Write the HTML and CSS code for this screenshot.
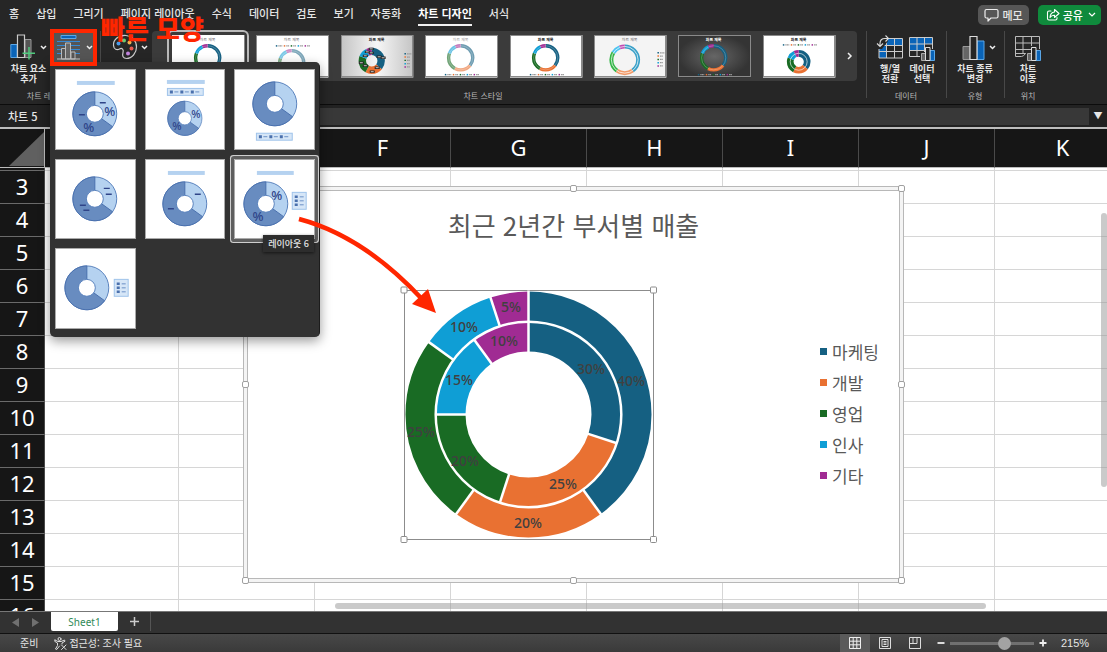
FILE: index.html
```html
<!DOCTYPE html>
<html lang="ko">
<head>
<meta charset="utf-8">
<title>차트 디자인</title>
<link rel="stylesheet" href="styles.css">
</head>
<body>
<svg class="defs" aria-hidden="true">
  <defs>
    <g id="mini-donut">
      <circle r="22" fill="#b5d2f0" stroke="#5b83bd"/>
      <path d="M0 0V-22A22 22 0 1 0 17.8 12.9Z" fill="#688cc0" stroke="#4a70ad"/>
      <circle r="8.5" fill="#fff" stroke="#5b83bd"/>
    </g>
    <g id="mini-legend-row">
      <rect x=".5" y=".5" width="36" height="7" fill="#d6e6f7" stroke="#9fc3ea"/>
      <path d="M3 4h3M13.500 4h3M24 4h3" stroke="#4a70ad" stroke-width="3"/>
      <path d="M7.500 4h4M18 4h4M28.500 4h4" stroke="#6a8fc6"/>
    </g>
    <g id="mini-legend-col">
      <rect x=".5" y=".5" width="14" height="17" fill="#d6e6f7" stroke="#9fc3ea"/>
      <path d="M3 5h3M3 9h3M3 13h3" stroke="#4a70ad" stroke-width="2.500"/>
      <path d="M8 5h4M8 9h4M8 13h4" stroke="#6a8fc6"/>
    </g>
    <g id="style-ring" fill="none" stroke-width="3.400" transform="rotate(-90)">
      <circle r="12.200" pathLength="100" stroke="#156082" stroke-dasharray="36 64"/>
      <circle r="12.200" pathLength="100" stroke="#e97132" stroke-dasharray="22 78" stroke-dashoffset="-36"/>
      <circle r="12.200" pathLength="100" stroke="#196b24" stroke-dasharray="23 77" stroke-dashoffset="-58"/>
      <circle r="12.200" pathLength="100" stroke="#0f9ed5" stroke-dasharray="12 88" stroke-dashoffset="-81"/>
      <circle r="12.200" pathLength="100" stroke="#a02b93" stroke-dasharray="7 93" stroke-dashoffset="-93"/>
      <circle r="12.200" stroke="#fff" stroke-width=".4" opacity=".6"/>
    </g>
    <g id="style-donut" fill="none" stroke-width="7.500" transform="rotate(-90)">
      <circle r="9.500" pathLength="100" stroke="#156082" stroke-dasharray="36 64"/>
      <circle r="9.500" pathLength="100" stroke="#e97132" stroke-dasharray="22 78" stroke-dashoffset="-36"/>
      <circle r="9.500" pathLength="100" stroke="#196b24" stroke-dasharray="23 77" stroke-dashoffset="-58"/>
      <circle r="9.500" pathLength="100" stroke="#0f9ed5" stroke-dasharray="12 88" stroke-dashoffset="-81"/>
      <circle r="9.500" pathLength="100" stroke="#a02b93" stroke-dasharray="7 93" stroke-dashoffset="-93"/>
    </g>
    <g id="style-keys">
      <path d="M0 0h1.500" stroke="#156082" stroke-width="1.500"/><path d="M8 0h1.500" stroke="#e97132" stroke-width="1.500"/><path d="M15 0h1.500" stroke="#196b24" stroke-width="1.500"/><path d="M22 0h1.500" stroke="#0f9ed5" stroke-width="1.500"/><path d="M29 0h1.500" stroke="#a02b93" stroke-width="1.500"/>
      <path d="M2.500 0h4M10.500 0h3M17.500 0h3M24.500 0h3M31.500 0h3" stroke="#999" stroke-width="1.200" stroke-dasharray="1.300 .3"/>
    </g>
    <g id="style-keys-col">
      <path d="M0 0h1.500" stroke="#156082" stroke-width="1.500"/><path d="M0 3.300h1.500" stroke="#e97132" stroke-width="1.500"/><path d="M0 6.600h1.500" stroke="#196b24" stroke-width="1.500"/><path d="M0 9.900h1.500" stroke="#0f9ed5" stroke-width="1.500"/><path d="M0 13.200h1.500" stroke="#a02b93" stroke-width="1.500"/>
      <path d="M2.500 0h4.500M2.500 3.300h3M2.500 6.600h3M2.500 9.900h3M2.500 13.200h3" stroke="#999" stroke-width="1.200" stroke-dasharray="1.300 .3"/>
    </g>
    <linearGradient id="shade-light"><stop offset="0" stop-color="#c4c4c4"/><stop offset=".5" stop-color="#f6f6f6"/><stop offset="1" stop-color="#c4c4c4"/></linearGradient>
    <radialGradient id="shade-dark"><stop offset="0" stop-color="#666"/><stop offset="1" stop-color="#343434"/></radialGradient>
  </defs>
</svg>

<header class="tabs">
  <nav class="tab-list">
    <a href="#">홈</a><a href="#">삽입</a><a href="#">그리기</a><a href="#">페이지 레이아웃</a><a href="#">수식</a><a href="#">데이터</a><a href="#">검토</a><a href="#">보기</a><a href="#">자동화</a><a href="#" class="current">차트 디자인</a><a href="#">서식</a>
  </nav>
  <div class="tab-actions">
    <button class="pill memo" type="button">
      <svg width="15" height="14" viewBox="0 0 15 14" fill="none" stroke="#eee" stroke-width="1.200" stroke-linejoin="round"><path d="M2.500 1.500h10q1.500 0 1.500 1.500v5.500q0 1.500-1.500 1.500H7l-3 3v-3H2.500Q1 10 1 8.500V3q0-1.500 1.500-1.500z"/></svg>메모</button>
    <button class="pill share" type="button">
      <svg width="14" height="14" viewBox="0 0 14 14" fill="none" stroke="#fff" stroke-width="1.100" stroke-linejoin="round" stroke-linecap="round"><path d="M5 3H3Q1.500 3 1.500 4.500v6Q1.500 12 3 12h6.500q1.500 0 1.500-1.500V9.500"/><path d="M8.500 1.500l4.500 4-4.500 4V7.200Q5.500 7 4 9.500 4.300 4.500 8.500 4z"/></svg>공유
      <svg width="8" height="6" viewBox="0 0 8 6" fill="none" stroke="#fff" stroke-width="1.200"><path d="M1 1l3 3 3-3"/></svg></button>
  </div>
</header>

<section class="ribbon">
  <div class="group group-layout">
    <div class="tools">
      <button class="tool" type="button">
        <span class="tool-icon">
          <svg width="26" height="27" viewBox="0 0 26 27"><path d="M.8 10.500h6.400v13H.8z" fill="#0a64b8" stroke="#5aa6e6"/><path d="M15 5.500h6v18h-6z" fill="#555" stroke="#999"/><path d="M7.500 1h7v22.500h-7z" fill="#262626" stroke="#ccc" stroke-width="1.200"/><path d="M19 13v12.500M12.500 19.200H25" stroke="#4fc97d" stroke-width="1.500"/></svg>
          <svg class="caret" width="7" height="5" viewBox="0 0 7 5"><path d="M1 1l2.500 2.500L6 1" fill="none" stroke="#eee" stroke-width="1.500"/></svg>
        </span>
        <span>차트 요소<br>추가</span>
      </button>
      <button class="tool tool-open" type="button" aria-label="빠른 레이아웃">
        <svg width="25" height="26" viewBox="0 0 25 26"><path d="M5 1.500h15v3H5z" fill="#0a64b8" stroke="#5aa6e6"/><path d="M1 7.500h23M1 11.500h23M1 15.500h23M1 19.500h23" stroke="#3389d6" stroke-width="1.200"/><path d="M5.500 14.500h4V25h-4zM15 18h4v7h-4z" fill="#555" stroke="#bbb"/><path d="M9.500 9h5v16h-5z" fill="#666" stroke="#bbb"/><path d="M1 25h23" stroke="#ccc"/></svg>
        <svg class="caret" width="7" height="5" viewBox="0 0 7 5"><path d="M1 1l2.500 2.500L6 1" fill="none" stroke="#eee" stroke-width="1.500"/></svg>
      </button>
    </div>
    <div class="group-name">차트 레이아웃</div>
  </div>

  <div class="group group-styles">
    <div class="tools">
      <button class="tool tool-colors" type="button" aria-label="색 변경">
        <svg width="26" height="27" viewBox="0 0 26 27"><path d="M14 1.500C6 1 1 6 1.500 11.500c.3 4 3.500 5 6 3.500 2.500-1.500 4.500.5 3.500 3.500-1 3.500 0 6 3.500 6C20 24.500 24.500 19 24.500 13S20 2 14 1.500z" fill="#262626" stroke="#ccc" stroke-width="1.200"/><circle cx="6.500" cy="9.500" r="2" fill="#4a9bea"/><circle cx="12" cy="6.500" r="2" fill="#6acb6e"/><circle cx="17.500" cy="8.500" r="2" fill="#f2b04e"/><circle cx="19.500" cy="14.500" r="2" fill="#ec5a50"/><circle cx="16" cy="19.500" r="2" fill="#c183dd"/></svg>
        <svg class="caret" width="7" height="5" viewBox="0 0 7 5"><path d="M1 1l2.500 2.500L6 1" fill="none" stroke="#eee" stroke-width="1.500"/></svg>
      </button>
      <div class="gallery">
        <button class="style chosen" type="button" aria-label="스타일 1"><svg viewBox="0 0 73 43"><rect width="73" height="43" fill="#fff"/><text x="36" y="6">차트 제목</text><use href="#style-ring" x="36" y="23"/></svg></button>
        <button class="style" type="button" aria-label="스타일 2"><svg viewBox="0 0 73 43"><rect width="73" height="43" fill="#fff"/><text x="36" y="6">차트 제목</text><use href="#style-keys" x="20" y="11"/><use href="#style-ring" x="36" y="28" opacity=".55"/></svg></button>
        <button class="style" type="button" aria-label="스타일 3"><svg viewBox="0 0 73 43"><rect width="73" height="43" fill="url(#shade-light)"/><text x="36" y="6" class="bold">차트 제목</text><use href="#style-donut" x="31" y="26"/><path d="M36 22h5M40 23h5M34 33h5M29 37h5M22 31h5M18 28h5M22 21h5M24 17h5M28 18h5M28 14h5" stroke="#222" stroke-width="2.400"/><path d="M37 22h3M41 23h3M35 33h3M30 37h3M23 31h3M19 28h3M23 21h3M25 17h3M29 18h3M29 14h3" stroke="#ccc"/><use href="#style-keys-col" x="64" y="19"/></svg></button>
        <button class="style" type="button" aria-label="스타일 4"><svg viewBox="0 0 73 43"><rect width="73" height="43" fill="#fff"/><text x="36" y="6" class="pale">차트 제목</text><use href="#style-ring" x="36" y="23" opacity=".62"/><use href="#style-keys" x="20" y="40"/></svg></button>
        <button class="style" type="button" aria-label="스타일 5"><svg viewBox="0 0 73 43"><rect width="73" height="43" fill="#fff"/><text x="36" y="6" class="bold">차트 제목</text><use href="#style-ring" x="36" y="23"/><use href="#style-keys" x="20" y="40"/></svg></button>
        <button class="style" type="button" aria-label="스타일 6"><svg viewBox="0 0 73 43"><rect width="73" height="43" fill="#f4f4f4"/><text x="36" y="6">차트 제목</text><g fill="none" stroke-width="4" transform="translate(31 25) rotate(-90)"><circle r="13.500" pathLength="100" stroke="#3aa0c8" stroke-dasharray="40 60"/><circle r="13.500" pathLength="100" stroke="#f29a68" stroke-dasharray="20 80" stroke-dashoffset="-40"/><circle r="13.500" pathLength="100" stroke="#35b548" stroke-dasharray="24 76" stroke-dashoffset="-60"/><circle r="13.500" pathLength="100" stroke="#4cc3f0" stroke-dasharray="10 90" stroke-dashoffset="-84"/><circle r="13.500" pathLength="100" stroke="#c04cb2" stroke-dasharray="6 94" stroke-dashoffset="-94"/><circle r="13.500" stroke="#fff" stroke-width=".7"/></g><use href="#style-keys-col" x="64" y="18"/></svg></button>
        <button class="style" type="button" aria-label="스타일 7"><svg viewBox="0 0 73 43"><rect width="73" height="43" fill="url(#shade-dark)"/><text x="36" y="6" class="light">차트 제목</text><use href="#style-ring" x="36" y="23"/><use href="#style-keys" x="20" y="40"/></svg></button>
        <button class="style" type="button" aria-label="스타일 8"><svg viewBox="0 0 73 43"><rect width="73" height="43" fill="#fff"/><text x="36" y="6" class="bold">차트 제목</text><use href="#style-keys" x="20" y="10"/><g transform="translate(36 27) scale(.9)"><use href="#style-donut"/><circle r="9.500" fill="none" stroke="#fff" stroke-width=".7"/></g></svg></button>
        <button class="gallery-next" type="button" aria-label="다음 스타일"><svg width="5" height="8" viewBox="0 0 5 8"><path d="M1 1l3 3-3 3" fill="none" stroke="#eee" stroke-width="1.500"/></svg></button>
      </div>
    </div>
    <div class="group-name">차트 스타일</div>
  </div>

  <div class="group group-data">
    <div class="tools">
      <button class="tool" type="button">
        <span class="tool-icon"><svg width="26" height="26" viewBox="0 0 26 26"><path d="M2 4h23v7H10v12H2z" fill="#0a64b8"/><path d="M10 11h15v12H10z" fill="#262626"/><path d="M2 3.500h23.500v19.500H2zM2 16.500h23.500M9.500 3.500v19.500M17.500 3.500v19.500M2 10.500h23.500" fill="none" stroke="#ccc"/><path d="M0 0h11v6L5 14H0z" fill="#262626"/><path d="M3 11V8.500Q3 3.500 8 3.500h3M8.500.5l3 3-3 3M0 8.500l3 3 3-3" fill="none" stroke="#ddd" stroke-width="1.100"/></svg></span>
        <span>행/열<br>전환</span>
      </button>
      <button class="tool" type="button">
        <span class="tool-icon"><svg width="26" height="26" viewBox="0 0 26 26"><path d="M1 3h15v13H1z" fill="#0a64b8"/><path d="M16 3h7v6h-7z" fill="#0a64b8"/><path d="M.5 2.500h23v19H.5zM.5 9h23M.5 15.500h23M8 2.500v19M15.500 2.500v19" fill="none" stroke="#ccc"/><path d="M11 17h5v-6h6v3h4v12H11z" fill="#262626"/><path d="M12.500 18.500h4v7h-4z" fill="#666" stroke="#aaa"/><path d="M21 15.500h4.500v10H21z" fill="#0a64b8" stroke="#5aa6e6"/><path d="M16.500 12.500h4.500v13h-4.500z" fill="#262626" stroke="#ddd"/></svg></span>
        <span>데이터<br>선택</span>
      </button>
    </div>
    <div class="group-name">데이터</div>
  </div>

  <div class="group group-type">
    <div class="tools">
      <button class="tool" type="button">
        <span class="tool-icon">
          <svg width="23" height="26" viewBox="0 0 23 26"><path d="M1 11.500h7v13H1z" fill="#666" stroke="#999"/><path d="M15 6h7v18.500h-7z" fill="#0a64b8" stroke="#5aa6e6"/><path d="M8 1.500h7v23H8z" fill="#262626" stroke="#ddd" stroke-width="1.200"/></svg>
          <svg class="caret" width="7" height="5" viewBox="0 0 7 5"><path d="M1 1l2.500 2.500L6 1" fill="none" stroke="#eee" stroke-width="1.500"/></svg>
        </span>
        <span>차트 종류<br>변경</span>
      </button>
    </div>
    <div class="group-name">유형</div>
  </div>

  <div class="group group-place">
    <div class="tools">
      <button class="tool" type="button">
        <span class="tool-icon"><svg width="26" height="26" viewBox="0 0 26 26"><path d="M.5 1.500h24v17h-14q-2 3-4 3h-6zM.5 8h24M.5 14.500h24M8 1.500v17M16.500 1.500v13M.5 18.500h10" fill="none" stroke="#bbb"/><path d="M11 17h5v-6h6v3h4v12H11z" fill="#262626"/><path d="M12.500 18.500h4v7h-4z" fill="#666" stroke="#aaa"/><path d="M21 15.500h4.500v10H21z" fill="#0a64b8" stroke="#5aa6e6"/><path d="M16.500 12.500h4.500v13h-4.500z" fill="#262626" stroke="#ddd"/></svg></span>
        <span>차트<br>이동</span>
      </button>
    </div>
    <div class="group-name">위치</div>
  </div>
</section>

<section class="formula-bar">
  <div class="name-box">차트 5</div>
  <input class="formula" type="text" aria-label="수식 입력줄">
  <button class="expand" type="button" aria-label="수식 입력줄 확장">▼</button>
</section>

<main class="sheet">
  <table class="cells">
    <colgroup><col class="c-head"><col class="c-first"><col><col><col><col><col><col><col></colgroup>
    <thead>
      <tr><th class="corner"><svg width="35" height="34" viewBox="0 0 35 34"><path d="M35 0v34H0z" fill="#606060"/></svg></th><th>D</th><th>E</th><th>F</th><th>G</th><th>H</th><th>I</th><th>J</th><th>K</th></tr>
    </thead>
    <tbody>
      <tr class="cut"><th></th><td></td><td></td><td></td><td></td><td></td><td></td><td></td><td></td></tr>
      <tr><th>3</th><td></td><td></td><td></td><td></td><td></td><td></td><td></td><td></td></tr>
      <tr><th>4</th><td></td><td></td><td></td><td></td><td></td><td></td><td></td><td></td></tr>
      <tr><th>5</th><td></td><td></td><td></td><td></td><td></td><td></td><td></td><td></td></tr>
      <tr><th>6</th><td></td><td></td><td></td><td></td><td></td><td></td><td></td><td></td></tr>
      <tr><th>7</th><td></td><td></td><td></td><td></td><td></td><td></td><td></td><td></td></tr>
      <tr><th>8</th><td></td><td></td><td></td><td></td><td></td><td></td><td></td><td></td></tr>
      <tr><th>9</th><td></td><td></td><td></td><td></td><td></td><td></td><td></td><td></td></tr>
      <tr><th>10</th><td></td><td></td><td></td><td></td><td></td><td></td><td></td><td></td></tr>
      <tr><th>11</th><td></td><td></td><td></td><td></td><td></td><td></td><td></td><td></td></tr>
      <tr><th>12</th><td></td><td></td><td></td><td></td><td></td><td></td><td></td><td></td></tr>
      <tr><th>13</th><td></td><td></td><td></td><td></td><td></td><td></td><td></td><td></td></tr>
      <tr><th>14</th><td></td><td></td><td></td><td></td><td></td><td></td><td></td><td></td></tr>
      <tr><th>15</th><td></td><td></td><td></td><td></td><td></td><td></td><td></td><td></td></tr>
      <tr><th>16</th><td></td><td></td><td></td><td></td><td></td><td></td><td></td><td></td></tr>
    </tbody>
  </table>

  <figure class="chart">
    <div class="chart-area">
      <figcaption>최근 2년간 부서별 매출</figcaption>
      <div class="chart-body">
        <svg class="plot" width="250" height="250" viewBox="0 0 250 250" role="img" aria-label="부서별 매출 도넛 차트">
          <rect x=".5" y=".5" width="249" height="249" fill="none" stroke="#8c8c8c"/>
          <g transform="translate(124.500 124.500) rotate(-90)" fill="none">
            <g stroke-width="31">
              <circle r="107.500" pathLength="100" stroke="#156082" stroke-dasharray="40 60"/>
              <circle r="107.500" pathLength="100" stroke="#e97132" stroke-dasharray="20 80" stroke-dashoffset="-40"/>
              <circle r="107.500" pathLength="100" stroke="#196b24" stroke-dasharray="25 75" stroke-dashoffset="-60"/>
              <circle r="107.500" pathLength="100" stroke="#0f9ed5" stroke-dasharray="10 90" stroke-dashoffset="-85"/>
              <circle r="107.500" pathLength="100" stroke="#a02b93" stroke-dasharray="5 95" stroke-dashoffset="-95"/>
            </g>
            <g stroke-width="30">
              <circle r="78" pathLength="100" stroke="#156082" stroke-dasharray="30 70"/>
              <circle r="78" pathLength="100" stroke="#e97132" stroke-dasharray="25 75" stroke-dashoffset="-30"/>
              <circle r="78" pathLength="100" stroke="#196b24" stroke-dasharray="20 80" stroke-dashoffset="-55"/>
              <circle r="78" pathLength="100" stroke="#0f9ed5" stroke-dasharray="15 85" stroke-dashoffset="-75"/>
              <circle r="78" pathLength="100" stroke="#a02b93" stroke-dasharray="10 90" stroke-dashoffset="-90"/>
            </g>
            <g stroke="#fff" stroke-width="2.500">
              <circle r="92.800"/>
              <path d="M62 0h62"/>
              <path d="M93 0h31" transform="rotate(144)"/><path d="M93 0h31" transform="rotate(216)"/><path d="M93 0h31" transform="rotate(306)"/><path d="M93 0h31" transform="rotate(342)"/>
              <path d="M62 0h31" transform="rotate(108)"/><path d="M62 0h31" transform="rotate(198)"/><path d="M62 0h31" transform="rotate(270)"/><path d="M62 0h31" transform="rotate(324)"/>
            </g>
          </g>
          <g class="plot-labels">
            <text x="187" y="84">30%</text><text x="159" y="199">25%</text><text x="61" y="176">20%</text><text x="55" y="95">15%</text><text x="100" y="56">10%</text>
            <text x="227" y="96">40%</text><text x="124" y="238">20%</text><text x="17" y="147">25%</text><text x="60" y="42">10%</text><text x="107" y="22">5%</text>
          </g>
          <g fill="#fff" stroke="#8c8c8c"><rect x="-3" y="-3" width="6" height="6" rx="1"/><rect x="246.500" y="-3" width="6" height="6" rx="1"/><rect x="-3" y="246.500" width="6" height="6" rx="1"/><rect x="246.500" y="246.500" width="6" height="6" rx="1"/></g>
        </svg>
        <ul class="legend">
          <li class="k1">마케팅</li><li class="k2">개발</li><li class="k3">영업</li><li class="k4">인사</li><li class="k5">기타</li>
        </ul>
      </div>
    </div>
    <i class="handle tl"></i><i class="handle tc"></i><i class="handle tr"></i><i class="handle ml"></i><i class="handle mr"></i><i class="handle bl"></i><i class="handle bc"></i><i class="handle br"></i>
  </figure>
  <div class="scroll-y"></div>
  <div class="scroll-x"></div>
</main>

<section class="sheet-tabs">
  <button class="step" type="button" aria-label="이전 시트"><svg width="7" height="9" viewBox="0 0 7 9"><path d="M7 0v9L0 4.500z" fill="#707070"/></svg></button>
  <button class="step" type="button" aria-label="다음 시트"><svg width="7" height="9" viewBox="0 0 7 9"><path d="M0 0v9l7-4.500z" fill="#707070"/></svg></button>
  <button class="sheet-tab" type="button">Sheet1</button>
  <button class="add" type="button" aria-label="새 시트"><svg width="9" height="9" viewBox="0 0 9 9"><path d="M4.500 0v9M0 4.500h9" stroke="#ccc" stroke-width="1.500"/></svg></button>
</section>

<footer class="status">
  <span class="ready">준비</span>
  <button class="access" type="button">
    <svg width="13" height="13" viewBox="0 0 13 13" fill="none" stroke="#ddd" stroke-linecap="round" stroke-linejoin="round"><circle cx="5.500" cy="2" r="1.500"/><path d="M1 3l3 1.500h3L10.500 3l.5 1.200L8 6v1M1 3L.7 4.300 3.500 6v2.500L1.500 12l1.200.5L5.500 9"/><path d="M7.500 8l4.500 4.500M12 8l-4.500 4.500"/></svg>접근성: 조사 필요</button>
  <div class="views">
    <button class="view on" type="button" aria-label="기본 보기"><svg width="12" height="12" viewBox="0 0 12 12" fill="none" stroke="#eee"><path d="M.5.5h11v11H.5zM4.200.5v11M7.800.5v11M.5 4.200h11M.5 7.800h11"/></svg></button>
    <button class="view" type="button" aria-label="페이지 레이아웃 보기"><svg width="12" height="12" viewBox="0 0 12 12" fill="none" stroke="#ddd"><path d="M.5.500h11v11H.5zM3 2.500h6v7H3zM4.500 4.500h3M4.500 6h3M4.500 7.500h3"/></svg></button>
    <button class="view" type="button" aria-label="페이지 나누기 미리 보기"><svg width="12" height="12" viewBox="0 0 12 12" fill="none" stroke="#ddd"><path d="M.5.500h11v11H.5zM4 .5v6M8 .5v6M.5 6.500H8"/></svg></button>
  </div>
  <button class="zoom-step" type="button" aria-label="축소"><svg width="8" height="8" viewBox="0 0 8 8"><path d="M.5 4h7" stroke="#eee" stroke-width="1.800"/></svg></button>
  <input class="zoom" type="range" min="0" max="100" value="68" aria-label="확대/축소">
  <button class="zoom-step" type="button" aria-label="확대"><svg width="8" height="8" viewBox="0 0 8 8"><path d="M.5 4h7M4 .5v7" stroke="#eee" stroke-width="1.800"/></svg></button>
  <span class="percent">215%</span>
</footer>

<div class="layout-menu">
  <button type="button" aria-label="레이아웃 1"><svg viewBox="0 0 81 81"><rect x="22" y="12" width="38" height="4" fill="#b5d2f0"/><use href="#mini-donut" x="40" y="45"/><path d="M45 34h6M24 46h6" stroke="#2f4488" stroke-width="1.500"/><text x="55" y="47">%</text><text x="34" y="63">%</text></svg></button>
  <button type="button" aria-label="레이아웃 2"><svg viewBox="0 0 81 81"><rect x="22" y="11" width="38" height="4" fill="#b5d2f0"/><use href="#mini-legend-row" x="22" y="19"/><use href="#mini-donut" transform="translate(40 49.500) scale(.78)"/><text x="51" y="49" class="small">%</text><text x="32" y="61" class="small">%</text></svg></button>
  <button type="button" aria-label="레이아웃 3"><svg viewBox="0 0 81 81"><use href="#mini-donut" x="41" y="35"/><use href="#mini-legend-row" x="22" y="64"/></svg></button>
  <button type="button" aria-label="레이아웃 4"><svg viewBox="0 0 81 81"><use href="#mini-donut" x="40" y="40"/><path d="M49 29.500h6M51 35.500h6M25 46.500h6M28.500 51.500h6" stroke="#2f4488" stroke-width="1.500"/></svg></button>
  <button type="button" aria-label="레이아웃 5"><svg viewBox="0 0 81 81"><rect x="23" y="12" width="37" height="4" fill="#b5d2f0"/><use href="#mini-donut" x="40" y="45"/><path d="M50 35.500h6M23 50h6" stroke="#2f4488" stroke-width="1.500"/></svg></button>
  <button type="button" class="hovered" aria-label="레이아웃 6"><svg viewBox="0 0 81 81"><rect x="23" y="12" width="37" height="4" fill="#b5d2f0"/><use href="#mini-donut" x="32" y="45"/><text x="43" y="41">%</text><text x="24" y="62">%</text><use href="#mini-legend-col" x="58" y="33"/></svg></button>
  <button type="button" aria-label="레이아웃 7"><svg viewBox="0 0 81 81"><use href="#mini-donut" x="32" y="40"/><use href="#mini-legend-col" x="59" y="31"/></svg></button>
  <span class="tooltip">레이아웃 6</span>
</div>

<div class="mark-box"></div>
<div class="mark-text">빠른 모양</div>
<svg class="mark-arrow" width="142" height="102" viewBox="0 0 142 102"><path d="M2 5Q66 22 124 84" fill="none" stroke="#ff2600" stroke-width="4.500"/><path d="M139 99l-24-9 16-15z" fill="#ff2600"/></svg>
</body>
</html>
```
FILE: styles.css
```css
* { box-sizing: border-box; }

body {
  margin: 0;
  height: 100vh;
  display: flex;
  flex-direction: column;
  position: relative;
  overflow: hidden;
  background: #262626;
  color: #e6e6e6;
  font-family: "Noto Sans CJK KR", "Noto Sans", sans-serif;
  font-size: 11px;
}

button {
  margin: 0;
  padding: 0;
  border: 0;
  background: none;
  color: inherit;
  font: inherit;
}

svg { display: block; overflow: visible; }
.defs { position: absolute; width: 0; height: 0; }

/* Ribbon tabs */
.tabs {
  flex: none;
  height: 30px;
  display: flex;
  justify-content: space-between;
  padding: 0 6px 0 9px;
}
.tab-list { display: flex; gap: 17px; }
.tab-list a {
  height: 26px;
  padding-top: 1px;
  line-height: 24px;
  color: #e6e6e6;
  font-weight: 500;
  text-decoration: none;
  white-space: nowrap;
}
.tab-list .current {
  color: #fff;
  font-weight: 700;
  border-bottom: 2px solid #f0f0f0;
}
.tab-actions { display: flex; gap: 9px; padding-top: 5px; }
.pill {
  height: 20px;
  display: flex;
  align-items: center;
  gap: 4px;
  padding: 0 6px;
  border-radius: 5px;
  font-weight: 500;
}
.memo { background: #565656; }
.share { gap: 3px; background: #0f8a3c; color: #fff; padding: 0 5px 0 8px; }
.share svg:last-child { margin-left: 2px; }

/* Ribbon */
.ribbon {
  flex: none;
  height: 75px;
  display: flex;
  border-bottom: 1px solid #0c0c0c;
}
.group {
  flex: none;
  display: flex;
  flex-direction: column;
  justify-content: space-between;
  position: relative;
}
.group + .group::before {
  content: "";
  position: absolute;
  left: 0;
  top: 1px;
  bottom: 6px;
  width: 1px;
  background: #484848;
}
.group-name {
  padding-bottom: 3px;
  line-height: 11px;
  font-size: 8px;
  color: #b8b8b8;
  text-align: center;
}
.tools { display: flex; justify-content: center; align-items: flex-start; }
.tool {
  display: flex;
  flex-direction: column;
  align-items: center;
  padding-top: 4px;
  font-size: 9px;
  font-weight: 700;
  line-height: 10px;
  text-align: center;
  white-space: nowrap;
}
.tool-icon { display: flex; align-items: center; gap: 4px; height: 27px; margin-bottom: 3px; }
.group-layout { width: 100px; }
.group-layout .tools { gap: 5px; justify-content: flex-start; padding-left: 10px; }
.tool-open {
  flex-direction: row;
  gap: 5px;
  height: 32px;
  margin-top: 1px;
  padding: 0 4px;
  background: #555;
}
.group-styles { flex: 1; min-width: 0; }
.group-styles .tools { justify-content: flex-start; padding: 0 9px 0 12px; }
.tool-colors { flex-direction: row; gap: 3px; margin-right: 4px; }
.gallery {
  flex: 1;
  min-width: 0;
  display: flex;
  align-items: center;
  gap: 12px;
  height: 50px;
  margin-top: 1px;
  padding: 0 5px 0 20px;
  border-radius: 4px;
  background: #3b3b3b;
}
.style { flex: 1; min-width: 0; outline: 1px solid #8a8a8a; outline-offset: -1px; }
.style svg { width: 100%; }
.style text { font-size: 4px; fill: #666; text-anchor: middle; }
.style .bold { font-weight: 700; fill: #222; }
.style .pale { fill: #999; }
.style .light { font-weight: 700; fill: #fff; }
.chosen { outline: 2px solid #bbb; outline-offset: 3px; border-radius: 1px; }
.group-data { width: 80px; }
.group-data .tools { gap: 6px; }
.group-type { width: 58px; }
.group-type .tool-icon { margin-left: 8px; }
.group-place { width: 103px; padding-right: 55px; }

/* Formula bar */
.formula-bar {
  flex: none;
  height: 22px;
  display: flex;
  align-items: center;
  background: #222;
}
.name-box { width: 120px; padding-left: 8px; line-height: 20px; font-weight: 500; }
.formula {
  flex: 1;
  min-width: 0;
  height: 17px;
  border: 0;
  background: #383838;
  color: #e6e6e6;
}
.expand { width: 18px; font-size: 9px; line-height: 18px; }

/* Worksheet */
.sheet {
  flex: 1;
  min-height: 0;
  position: relative;
  overflow: hidden;
  border-top: 2px solid #bdbdbd;
  background: #fff;
}
.cells {
  table-layout: fixed;
  width: 1131px;
  border-collapse: separate;
  border-spacing: 0;
}
.cells col { width: 136px; }
.cells .c-head { width: 45px; }
.cells .c-first { width: 134px; }
.cells th {
  padding: 0 0 2px;
  border-right: 1px solid #4a4a4a;
  border-bottom: 1px solid #6a6a6a;
  background: #161616;
  color: #fff;
  font: 22px/30px "Noto Sans", "Noto Sans CJK KR", sans-serif;
}
.cells thead th { height: 39px; border-bottom-color: #bdbdbd; }
.cells thead .corner { padding: 3px 0 0 9px; border-right-color: #bdbdbd; vertical-align: top; }
.cells td { border-right: 1px solid #d6d6d6; border-bottom: 1px solid #d6d6d6; padding: 0; }
.cells tbody tr { height: 33px; }
.cells .cut { height: 3px; line-height: 0; }
.cells .cut th { padding: 0; line-height: 0; font-size: 0; }

.scroll-y, .scroll-x { position: absolute; border-radius: 4px; background: rgba(150, 150, 150, .5); }
.scroll-y { right: 0; top: 84px; bottom: 124px; width: 6px; }
.scroll-x { left: 335px; right: 121px; bottom: 2px; height: 6px; }

/* Chart object floating over the cells */
.chart {
  position: absolute;
  left: 243px;
  top: 57px;
  margin: 0;
  padding: 3px;
  border: 1px solid #b8b8b8;
  background: #f4f4f4;
  width: 661px;
}
.chart-area {
  padding: 11px 20px 38px 156px;
  border: 1px solid #b8b8b8;
  background: #fff;
}
.chart figcaption {
  margin-left: -136px;
  line-height: 46px;
  font-size: 26px;
  color: #595959;
  text-align: center;
}
.chart-body { display: flex; justify-content: space-between; padding-top: 42px; }
.plot-labels text {
  font: 500 14px "Noto Sans", sans-serif;
  fill: #404040;
  text-anchor: middle;
}
.legend { margin: 0; padding: 46px 0 0; list-style: none; }
.legend li {
  display: flex;
  align-items: center;
  gap: 5px;
  line-height: 31px;
  font-size: 17px;
  color: #595959;
}
.legend li::before { content: ""; width: 7px; height: 7px; background: currentColor; }
.legend .k1::before { color: #156082; }
.legend .k2::before { color: #e97132; }
.legend .k3::before { color: #196b24; }
.legend .k4::before { color: #0f9ed5; }
.legend .k5::before { color: #a02b93; }

.handle {
  position: absolute;
  width: 7px;
  height: 7px;
  border: 1px solid #a0a0a0;
  border-radius: 2px;
  background: #fff;
}
.tl, .tc, .tr { top: -2px; }
.bl, .bc, .br { bottom: -2px; }
.tl, .ml, .bl { left: -2px; }
.tr, .mr, .br { right: -2px; }
.tc, .bc { left: calc(50% - 4px); }
.ml, .mr { top: calc(50% - 4px); }

/* Sheet tabs */
.sheet-tabs {
  flex: none;
  height: 22px;
  display: flex;
  align-items: flex-start;
  border-top: 1px solid #777;
  background: #323232;
}
.step { height: 21px; width: 20px; display: flex; align-items: center; justify-content: center; }
.step:first-child { margin-left: 5px; }
.sheet-tab {
  width: 67px;
  height: 19px;
  margin-left: 6px;
  border-radius: 0 0 2px 2px;
  background: #fff;
  color: #2f8a57;
  font: 10px/21px "Noto Sans", sans-serif;
}
.add {
  width: 33px;
  height: 19px;
  display: flex;
  align-items: center;
  justify-content: center;
  border-right: 1px solid #555;
}

/* Status bar */
.status {
  flex: none;
  height: 19px;
  display: flex;
  align-items: center;
  border-top: 1px solid #111;
  background: linear-gradient(#484848, #3a3a3a);
  font-size: 10px;
  line-height: 18px;
}
.ready { margin-left: 20px; }
.access { display: flex; align-items: center; gap: 2px; margin-left: 16px; }
.views { display: flex; margin-left: auto; }
.view { width: 30px; height: 18px; display: flex; align-items: center; justify-content: center; }
.on { background: #5a5a5a; }
.zoom-step { width: 8px; margin: 0 5px; }
.views + .zoom-step { margin-left: 7px; }
.zoom {
  appearance: none;
  width: 84px;
  height: 14px;
  margin: 0;
  background: linear-gradient(#707070, #707070) center / 100% 3px no-repeat;
}
.zoom::-webkit-slider-thumb {
  appearance: none;
  width: 13px;
  height: 13px;
  border-radius: 50%;
  background: #a3a3a3;
}
.percent { width: 46px; margin-right: 9px; text-align: center; font: 11px "Liberation Sans", sans-serif; }

/* Quick layout menu */
.layout-menu {
  position: absolute;
  left: 50px;
  top: 62px;
  width: 270px;
  display: grid;
  grid-template-columns: repeat(3, 1fr);
  gap: 9px;
  padding: 7px 4px 8px 5px;
  border: 1px solid #1c1c1c;
  border-width: 0 1px 0 0;
  border-radius: 5px;
  background: #323232;
  box-shadow: 0 4px 12px rgba(0, 0, 0, .4);
}
.layout-menu button { background: #fff; outline: 1px solid #aaa; outline-offset: -1px; }
.layout-menu svg { width: 100%; }
.layout-menu text { font: 500 13px "Noto Sans", sans-serif; fill: #2f4488; text-anchor: middle; }
.layout-menu .small { font-size: 11px; }
.layout-menu .hovered { border-radius: 1px; box-shadow: 0 0 0 3px #5e5e5e, 0 0 0 4px #cfcfcf; }
.tooltip {
  position: absolute;
  right: 5px;
  top: 173px;
  padding: 0 5px;
  background: #2d2d2d;
  box-shadow: 0 1px 3px rgba(0, 0, 0, .6);
  font-size: 9px;
  font-weight: 500;
  line-height: 17px;
}

/* Guide marks over the window */
.mark-box { position: absolute; left: 50px; top: 29px; width: 47px; height: 37px; border: 4px solid #ff2600; }
.mark-text {
  position: absolute;
  left: 101px;
  top: 10px;
  color: #ff2600;
  font-size: 26px;
  font-weight: 900;
  line-height: 36px;
  white-space: nowrap;
}
.mark-arrow { position: absolute; left: 297px; top: 214px; }
```
